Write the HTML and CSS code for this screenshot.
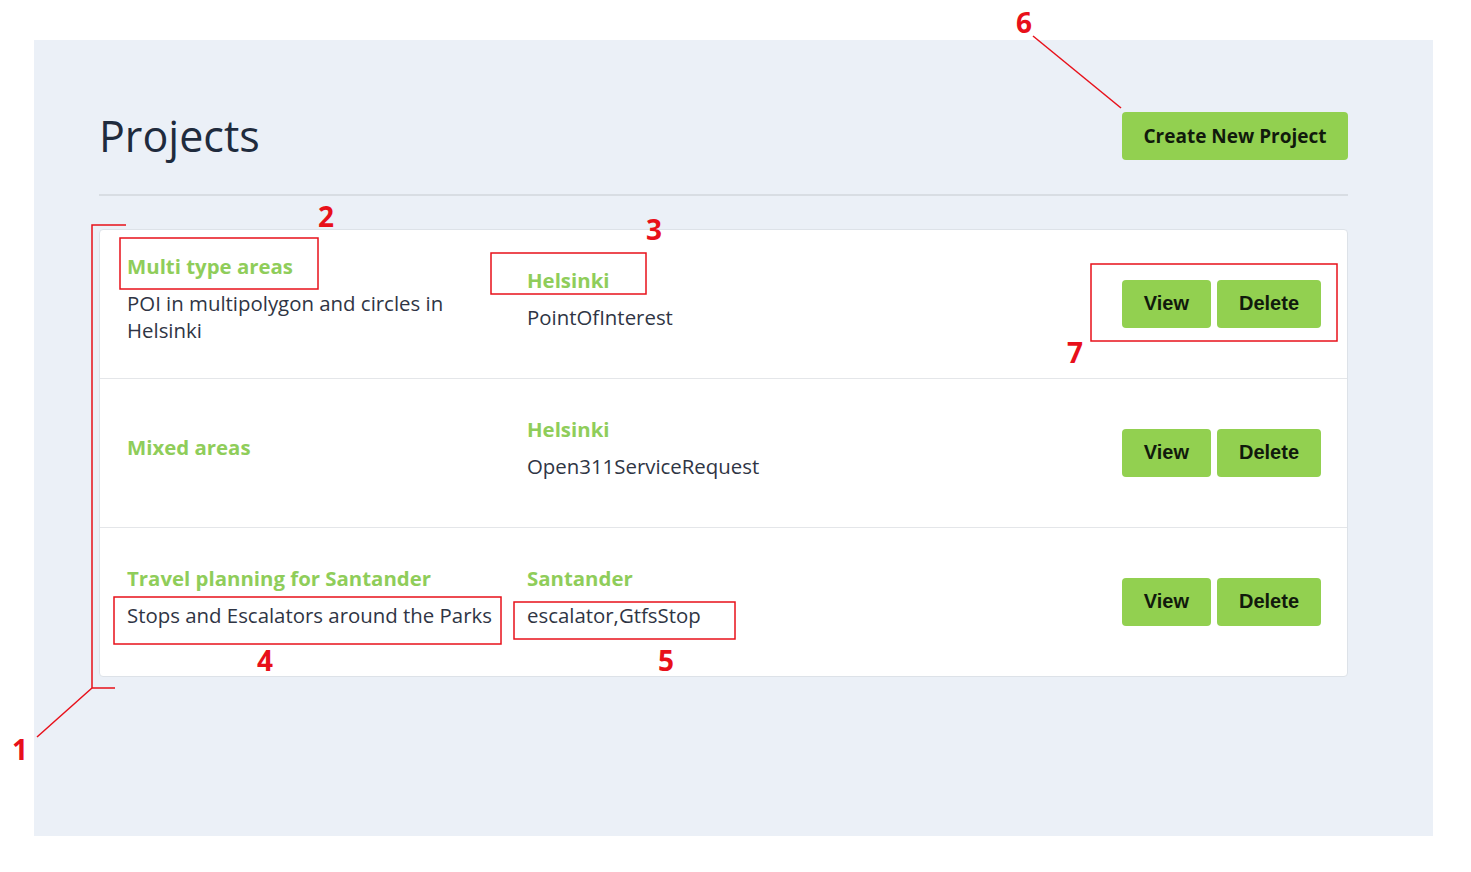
FILE: index.html
```html
<!DOCTYPE html>
<html lang="en">
<head>
<meta charset="utf-8">
<title>Projects</title>
<link rel="stylesheet" href="styles.css">
</head>
<body>
<div class="panel">
  <header class="head">
    <h1 class="page-title">Projects</h1>
    <button class="btn btn-create">Create New Project</button>
  </header>
  <div class="divider"></div>
  <div class="card">
    <div class="row">
      <div class="col col-name">
        <div class="item-title">Multi type areas</div>
        <div class="item-text">POI in multipolygon and circles in Helsinki</div>
      </div>
      <div class="col col-city">
        <div class="item-title">Helsinki</div>
        <div class="item-text">PointOfInterest</div>
      </div>
      <div class="actions">
        <button class="btn btn-small">View</button>
        <button class="btn btn-small">Delete</button>
      </div>
    </div>
    <div class="row">
      <div class="col col-name">
        <div class="item-title">Mixed areas</div>
      </div>
      <div class="col col-city">
        <div class="item-title">Helsinki</div>
        <div class="item-text">Open311ServiceRequest</div>
      </div>
      <div class="actions">
        <button class="btn btn-small">View</button>
        <button class="btn btn-small">Delete</button>
      </div>
    </div>
    <div class="row">
      <div class="col col-name">
        <div class="item-title">Travel planning for Santander</div>
        <div class="item-text">Stops and Escalators around the Parks</div>
      </div>
      <div class="col col-city">
        <div class="item-title">Santander</div>
        <div class="item-text">escalator,GtfsStop</div>
      </div>
      <div class="actions">
        <button class="btn btn-small">View</button>
        <button class="btn btn-small">Delete</button>
      </div>
    </div>
  </div>
</div>

<svg class="annot" width="1471" height="872" viewBox="0 0 1471 872">
  <g class="annot-lines">
    <polyline points="126,225 92,225 92,688 115,688"/>
    <line x1="92" y1="688" x2="37" y2="737"/>
    <line x1="1033" y1="36" x2="1121" y2="108"/>
    <rect x="120" y="238" width="198" height="51"/>
    <rect x="491" y="253" width="155" height="41"/>
    <rect x="1091" y="264" width="246" height="77"/>
    <rect x="114" y="597" width="387" height="47"/>
    <rect x="514" y="602" width="221" height="37"/>
  </g>
  <g class="annot-nums">
    <text x="20" y="760">1</text>
    <text x="326" y="227">2</text>
    <text x="654" y="240">3</text>
    <text x="265" y="671">4</text>
    <text x="666" y="671">5</text>
    <text x="1024" y="33">6</text>
    <text x="1075" y="363">7</text>
  </g>
</svg>
</body>
</html>
```

FILE: styles.css
```css
html, body {
  margin: 0;
  padding: 0;
  background: #ffffff;
}
body {
  font-family: "Open Sans", "Liberation Sans", sans-serif;
  position: relative;
  width: 1471px;
  height: 872px;
  overflow: hidden;
}
.panel {
  margin: 40px 38px 0 34px;
  height: 796px;
  box-sizing: border-box;
  background: #ebf0f7;
  padding: 72px 85px 0 65px;
}
.head {
  display: flex;
  justify-content: space-between;
  align-items: center;
  height: 48px;
}
.page-title {
  margin: 0;
  font-size: 43px;
  line-height: 48px;
  font-weight: 400;
  color: #1f2b3d;
}
.btn {
  border: none;
  background: #92d050;
  color: #111a0c;
  border-radius: 4px;
  cursor: pointer;
  height: 48px;
}
.btn-create {
  font-family: "Open Sans", "Liberation Sans", sans-serif;
  font-weight: 700;
  font-size: 19px;
  width: 226px;
  padding: 0;
}
.divider {
  margin-top: 34px;
  height: 2px;
  background: #d8dde3;
}
.card {
  margin-top: 33px;
  background: #ffffff;
  border: 1px solid #dde2e8;
  border-radius: 4px;
}
.row {
  display: flex;
  align-items: center;
  height: 148px;
  padding: 0 26px 0 27px;
  border-bottom: 1px solid #e4e6e9;
}
.row:last-child {
  border-bottom: none;
}
.col {
  padding-bottom: 12px;
}
.col-name {
  width: 380px;
  padding-right: 20px;
}
.col-city {
  flex: 1;
}
.item-title {
  color: #8fcd5a;
  font-weight: 700;
  font-size: 20.4px;
  line-height: 28px;
  margin-bottom: 10px;
}
.item-title:last-child {
  margin-bottom: 0;
}
.item-text {
  color: #2f3544;
  font-size: 20.4px;
  line-height: 27px;
}
.actions {
  display: flex;
  gap: 6px;
  padding-bottom: 1px;
}
.btn-small {
  font-family: "Liberation Sans", Arial, sans-serif;
  font-weight: 700;
  font-size: 20px;
  padding: 0 22px;
}
.annot {
  position: absolute;
  left: 0;
  top: 0;
  pointer-events: none;
}
.annot-lines {
  fill: none;
  stroke: #e8101a;
  stroke-width: 1.5;
}
.annot-nums text {
  fill: #e8101a;
  font-family: "Open Sans", "Liberation Sans", sans-serif;
  font-weight: 700;
  font-size: 28px;
  text-anchor: middle;
}
```
